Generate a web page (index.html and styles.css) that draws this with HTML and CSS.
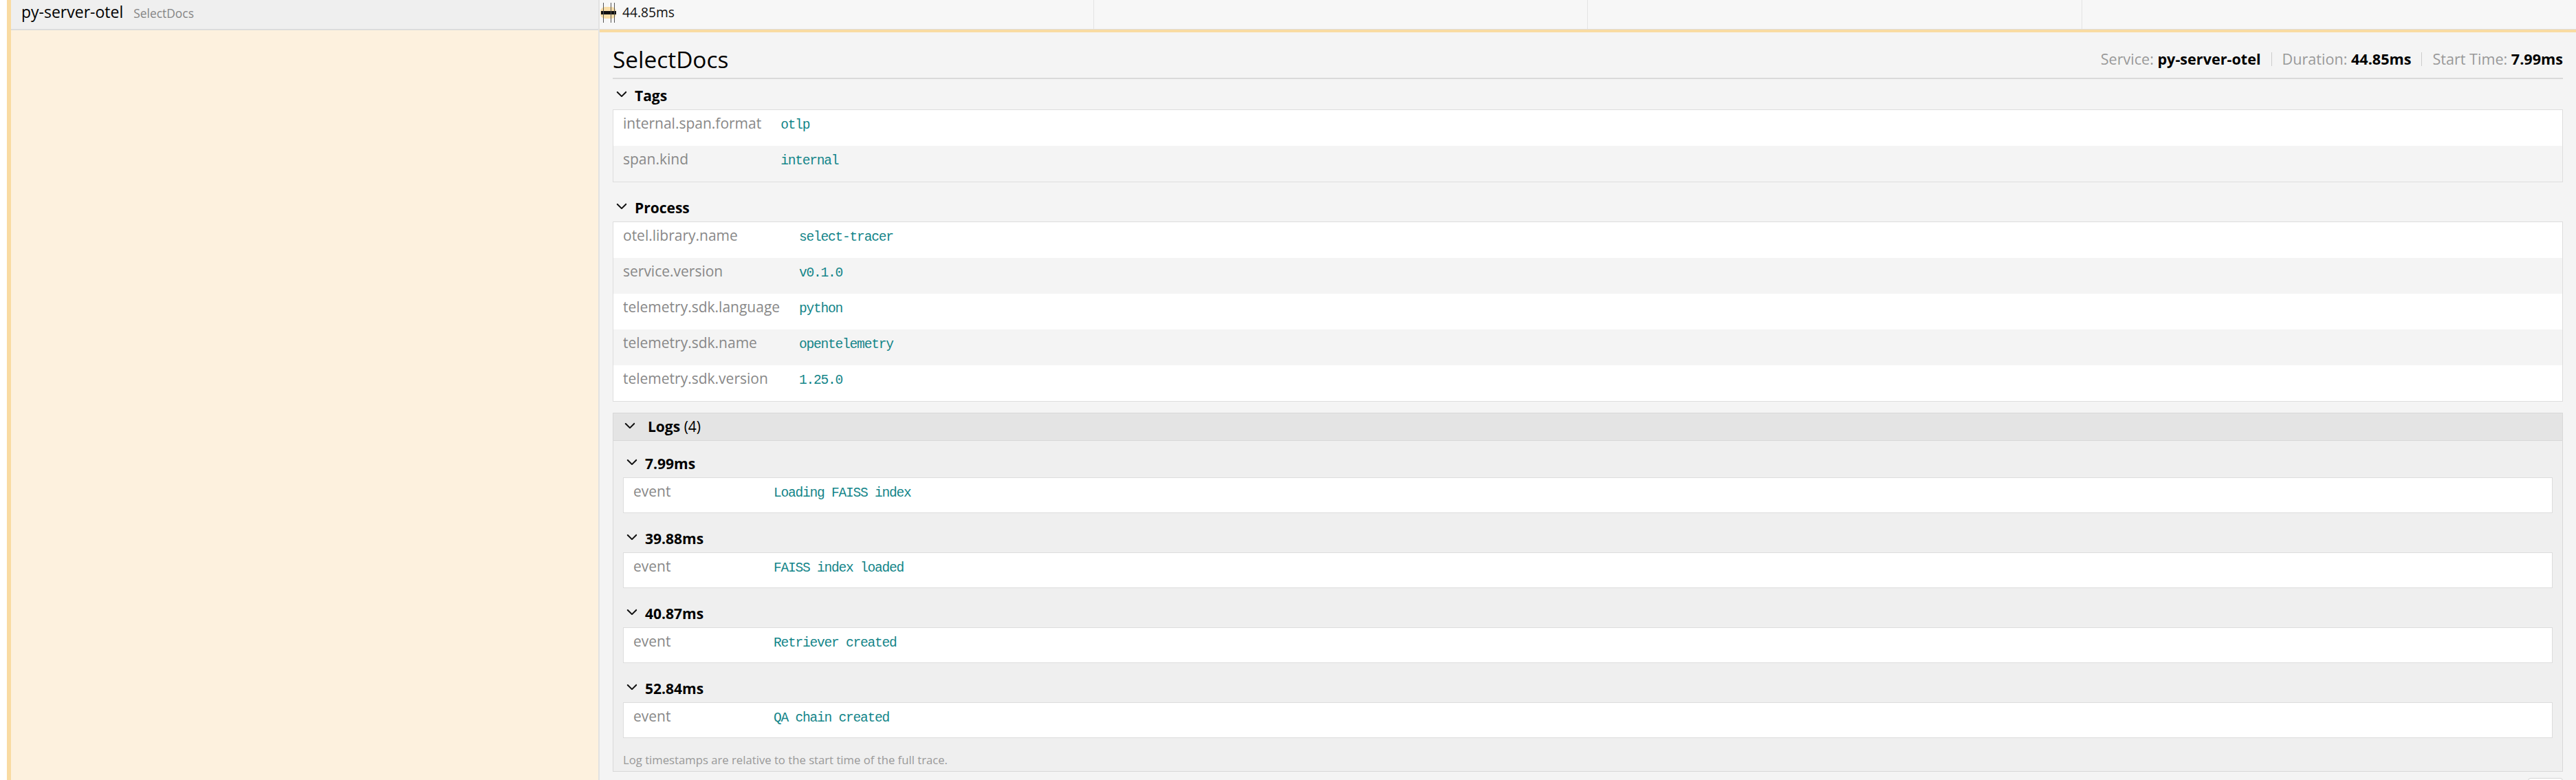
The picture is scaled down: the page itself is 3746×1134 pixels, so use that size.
FILE: index.html
```html
<!DOCTYPE html>
<html lang="en">
<head>
<meta charset="utf-8">
<title>py-server-otel: SelectDocs</title>
<link rel="stylesheet" href="styles.css">
</head>
<body>
<div class="page">
  <div class="left">
    <div class="left-inner">
      <div class="left-head"><span class="svc">py-server-otel</span><span class="op">SelectDocs</span></div>
      <div class="left-body"></div>
    </div>
  </div>
  <div class="right">
    <div class="timeline-head">
      <div class="tick-col first">
        <svg class="span-bar" width="26" height="42" viewBox="0 0 26 42" aria-hidden="true">
          <rect x="1" y="10" width="23" height="17" rx="7" fill="#f9dea8"/>
          <rect x="2" y="16" width="22" height="5" fill="#111"/>
          <rect x="5" y="4" width="1" height="29" fill="#555"/>
          <rect x="16" y="4" width="1" height="29" fill="#555"/>
          <rect x="21" y="4" width="1" height="29" fill="#555"/>
        </svg>
        <span class="dur">44.85ms</span>
      </div>
      <div class="tick-col"></div>
      <div class="tick-col"></div>
      <div class="tick-col"></div>
    </div>
    <div class="detail">
      <div class="title-row">
        <h2 class="title">SelectDocs</h2>
        <div class="overview">
          <span class="ov-item"><span class="ov-label">Service:</span> <strong>py-server-otel</strong></span>
          <span class="ov-sep"></span>
          <span class="ov-item"><span class="ov-label">Duration:</span> <strong>44.85ms</strong></span>
          <span class="ov-sep"></span>
          <span class="ov-item"><span class="ov-label">Start Time:</span> <strong>7.99ms</strong></span>
        </div>
      </div>
      <div class="divider"></div>

      <section class="kv-section">
        <div class="kv-head">
          <svg class="chev" viewBox="0 0 512 512" aria-hidden="true"><path d="M256 294.1L383 167c9.4-9.4 24.6-9.4 33.9 0s9.3 24.6 0 34L273 345c-9.1 9.1-23.7 9.3-33.1.7L95 201.1c-4.7-4.7-7-10.9-7-17s2.3-12.3 7-17c9.4-9.4 24.6-9.4 33.9 0l127.1 127z"/></svg>
          <span>Tags</span>
        </div>
        <table class="kv-table">
          <tbody>
            <tr><td class="k">internal.span.format</td><td class="v">otlp</td></tr>
            <tr><td class="k">span.kind</td><td class="v">internal</td></tr>
          </tbody>
        </table>
      </section>

      <section class="kv-section">
        <div class="kv-head">
          <svg class="chev" viewBox="0 0 512 512" aria-hidden="true"><path d="M256 294.1L383 167c9.4-9.4 24.6-9.4 33.9 0s9.3 24.6 0 34L273 345c-9.1 9.1-23.7 9.3-33.1.7L95 201.1c-4.7-4.7-7-10.9-7-17s2.3-12.3 7-17c9.4-9.4 24.6-9.4 33.9 0l127.1 127z"/></svg>
          <span>Process</span>
        </div>
        <table class="kv-table">
          <tbody>
            <tr><td class="k">otel.library.name</td><td class="v">select-tracer</td></tr>
            <tr><td class="k">service.version</td><td class="v">v0.1.0</td></tr>
            <tr><td class="k">telemetry.sdk.language</td><td class="v">python</td></tr>
            <tr><td class="k">telemetry.sdk.name</td><td class="v">opentelemetry</td></tr>
            <tr><td class="k">telemetry.sdk.version</td><td class="v">1.25.0</td></tr>
          </tbody>
        </table>
      </section>

      <section class="logs">
        <div class="logs-head">
          <svg class="chev logs-chev" viewBox="0 0 512 512" aria-hidden="true"><path d="M256 294.1L383 167c9.4-9.4 24.6-9.4 33.9 0s9.3 24.6 0 34L273 345c-9.1 9.1-23.7 9.3-33.1.7L95 201.1c-4.7-4.7-7-10.9-7-17s2.3-12.3 7-17c9.4-9.4 24.6-9.4 33.9 0l127.1 127z"/></svg>
          <span class="logs-title"><strong>Logs</strong> (4)</span>
        </div>
        <div class="logs-body">
          <div class="log-item">
            <div class="log-head">
              <svg class="chev" viewBox="0 0 512 512" aria-hidden="true"><path d="M256 294.1L383 167c9.4-9.4 24.6-9.4 33.9 0s9.3 24.6 0 34L273 345c-9.1 9.1-23.7 9.3-33.1.7L95 201.1c-4.7-4.7-7-10.9-7-17s2.3-12.3 7-17c9.4-9.4 24.6-9.4 33.9 0l127.1 127z"/></svg>
              <span>7.99ms</span>
            </div>
            <table class="kv-table log-table"><tbody><tr><td class="k">event</td><td class="v">Loading FAISS index</td></tr></tbody></table>
          </div>
          <div class="log-item">
            <div class="log-head">
              <svg class="chev" viewBox="0 0 512 512" aria-hidden="true"><path d="M256 294.1L383 167c9.4-9.4 24.6-9.4 33.9 0s9.3 24.6 0 34L273 345c-9.1 9.1-23.7 9.3-33.1.7L95 201.1c-4.7-4.7-7-10.9-7-17s2.3-12.3 7-17c9.4-9.4 24.6-9.4 33.9 0l127.1 127z"/></svg>
              <span>39.88ms</span>
            </div>
            <table class="kv-table log-table"><tbody><tr><td class="k">event</td><td class="v">FAISS index loaded</td></tr></tbody></table>
          </div>
          <div class="log-item">
            <div class="log-head">
              <svg class="chev" viewBox="0 0 512 512" aria-hidden="true"><path d="M256 294.1L383 167c9.4-9.4 24.6-9.4 33.9 0s9.3 24.6 0 34L273 345c-9.1 9.1-23.7 9.3-33.1.7L95 201.1c-4.7-4.7-7-10.9-7-17s2.3-12.3 7-17c9.4-9.4 24.6-9.4 33.9 0l127.1 127z"/></svg>
              <span>40.87ms</span>
            </div>
            <table class="kv-table log-table"><tbody><tr><td class="k">event</td><td class="v">Retriever created</td></tr></tbody></table>
          </div>
          <div class="log-item">
            <div class="log-head">
              <svg class="chev" viewBox="0 0 512 512" aria-hidden="true"><path d="M256 294.1L383 167c9.4-9.4 24.6-9.4 33.9 0s9.3 24.6 0 34L273 345c-9.1 9.1-23.7 9.3-33.1.7L95 201.1c-4.7-4.7-7-10.9-7-17s2.3-12.3 7-17c9.4-9.4 24.6-9.4 33.9 0l127.1 127z"/></svg>
              <span>52.84ms</span>
            </div>
            <table class="kv-table log-table"><tbody><tr><td class="k">event</td><td class="v">QA chain created</td></tr></tbody></table>
          </div>
          <p class="logs-note">Log timestamps are relative to the start time of the full trace.</p>
        </div>
      </section>

      <div class="span-id-row"><span class="copy-btn"></span></div>
    </div>
  </div>
</div>
</body>
</html>
```

FILE: styles.css
```css
html, body {
  margin: 0;
  padding: 0;
  height: 100%;
  overflow: hidden;
}

body {
  font-family: "Open Sans", "Noto Sans", sans-serif;
  background: #ffffff;
  color: #000000;
}

.page {
  display: flex;
  height: 1134px;
}

/* ---------- left column ---------- */
.left {
  flex: none;
  width: 872px;
  box-sizing: border-box;
  padding-left: 10px;
  background: #ffffff;
}

.left-inner {
  height: 100%;
  display: flex;
  flex-direction: column;
  border-left: 6px solid #f9dba2;
  border-right: 2px solid #e2e2e2;
}

.left-head {
  flex: none;
  height: 42px;
  background: #efefef;
  border-bottom: 2px solid #dcdcdc;
  padding-left: 15px;
  font-size: 23px;
  line-height: 34px;
  white-space: nowrap;
}

.svc {
  font-size: 23px;
  color: #000000;
}

.op {
  font-size: 17.4px;
  color: #858585;
  margin-left: 15px;
}

.left-body {
  flex: 1;
  background: #fdf1de;
}

/* ---------- right column ---------- */
.right {
  flex: 1;
  min-width: 0;
  display: flex;
  flex-direction: column;
  overflow: hidden;
}

.timeline-head {
  flex: none;
  height: 42px;
  display: grid;
  grid-template-columns: repeat(4, 1fr);
  background: #f7f7f7;
  border-bottom: 1px solid #dddddd;
}

.tick-col {
  border-right: 1px solid #e4e4e4;
}

.tick-col:last-child {
  border-right: none;
}

.tick-col.first {
  display: flex;
  align-items: flex-start;
  gap: 7px;
}

.span-bar {
  flex: none;
  display: block;
}

.dur {
  font-size: 19.2px;
  line-height: 34px;
  padding-top: 1px;
  color: #111111;
}

.detail {
  flex: 1;
  background: #f4f4f4;
  border-top: 4px solid #f9dba2;
  padding: 17px 19px 0;
}

.title-row {
  display: flex;
  align-items: center;
  justify-content: space-between;
  height: 44px;
}

.title {
  margin: 0;
  font-size: 33.4px;
  font-weight: 400;
  line-height: 44px;
  color: #000000;
}

.overview {
  display: flex;
  align-items: center;
  font-size: 21.6px;
  line-height: 30px;
  white-space: nowrap;
}

.ov-label {
  color: #999999;
}

.ov-item strong {
  font-weight: 700;
  color: #000000;
}

.ov-sep {
  width: 1px;
  height: 20px;
  background: #cccccc;
  margin: 0 15px;
}

.divider {
  height: 2px;
  background: #d9d9d9;
  margin-top: 5px;
}

/* ---------- key / value sections ---------- */
.kv-section {
  margin-top: 9px;
}

.kv-section + .kv-section {
  margin-top: 22px;
}

.kv-head {
  display: flex;
  align-items: center;
  height: 30px;
  margin-bottom: 5px;
  font-size: 21px;
  font-weight: 700;
  line-height: 30px;
}

.chev {
  flex: none;
  width: 22px;
  height: 22px;
  margin: 0 8px 5px 2px;
  fill: #111111;
}

.kv-table {
  width: 100%;
  border-collapse: separate;
  border-spacing: 0;
  border: 1px solid #dddddd;
  background: #ffffff;
  font-size: 21px;
}

.kv-table tr {
  height: 52px;
}

.kv-table tbody tr:nth-child(even) {
  background: #f4f4f4;
}

.kv-table td {
  padding: 4px 14px 0;
  vertical-align: baseline;
  line-height: 30px;
}

.kv-table .k {
  width: 1px;
  color: #888888;
  white-space: nowrap;
}

.kv-table .v {
  font-family: "Liberation Mono", "DejaVu Sans Mono", monospace;
  font-size: 19.5px;
  letter-spacing: -1.2px;
  color: #138589;
  white-space: pre;
}

/* ---------- logs ---------- */
.logs {
  margin-top: 16px;
  border: 1px solid #d8d8d8;
  background: #efefef;
}

.logs-head {
  display: flex;
  align-items: center;
  height: 39px;
  padding-left: 13px;
  background: #e4e4e4;
  border-bottom: 1px solid #d8d8d8;
  font-size: 21px;
  line-height: 39px;
}

.logs-head .logs-chev {
  margin: 0 15px 3px 0;
}

.logs-title strong {
  font-weight: 700;
}

.logs-body {
  padding: 6px 14px 0;
}

.log-item {
  margin-bottom: 10px;
}

.log-head {
  display: flex;
  align-items: center;
  height: 30px;
  padding: 12px 0 5px;
  font-size: 21px;
  font-weight: 700;
  line-height: 30px;
}

.log-table tr {
  height: 50px;
}

.log-table .k {
  width: 176px;
}

.logs-note {
  margin: 0;
  padding: 10px 0 4px;
  font-size: 16.7px;
  line-height: 24px;
  color: #999999;
}

.span-id-row {
  display: flex;
  justify-content: flex-end;
  margin-top: 9px;
}

.copy-btn {
  width: 51px;
  height: 40px;
  box-sizing: border-box;
  background: #ffffff;
  border: 1px solid #d4d4d4;
  border-radius: 4px;
}
```
